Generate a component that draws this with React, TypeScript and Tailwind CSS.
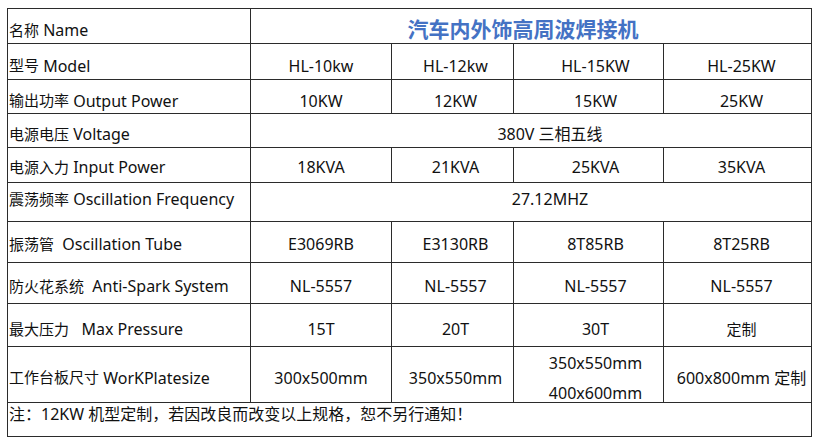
import React from 'react';

// Spec sheet for the HF welder — laid out as an Excel-like grid
const font = { fontFamily: '"Noto Sans", "Noto Sans CJK SC", sans-serif' };

type Cell = { text: string | string[]; span?: number; cls?: string };
type Row = { h: string; v: string; cn: string; en: string; cells: Cell[] };

const colPad = ['', 'pl-[6px]', 'pl-[14px]', 'pl-[8px]'];

const rows: Row[] = [
  { h: 'h-[35px]', v: 'pt-[8px]', cn: '名称', en: ' Name', cells: [{ text: '汽车内外饰高周波焊接机', span: 4, cls: 'text-[21px] font-bold text-[#4472c4] pr-[16px]' }] },
  { h: 'h-[36px]', v: 'pt-[8px]', cn: '型号', en: ' Model', cells: [{ text: 'HL-10kw' }, { text: 'HL-12kw' }, { text: 'HL-15KW' }, { text: 'HL-25KW' }] },
  { h: 'h-[34px]', v: 'pt-[8px]', cn: '输出功率', en: ' Output Power', cells: [{ text: '10KW' }, { text: '12KW' }, { text: '15KW' }, { text: '25KW' }] },
  { h: 'h-[34px]', v: 'pt-[7px]', cn: '电源电压', en: ' Voltage', cells: [{ text: '380V 三相五线', span: 4, cls: 'pl-[38px]' }] },
  { h: 'h-[35px]', v: 'pt-[4px]', cn: '电源入力', en: ' Input Power', cells: [{ text: '18KVA' }, { text: '21KVA' }, { text: '25KVA' }, { text: '35KVA' }] },
  { h: 'h-[39px]', v: 'pb-[6px]', cn: '震荡频率', en: ' Oscillation Frequency', cells: [{ text: '27.12MHZ', span: 4, cls: 'pl-[38px]' }] },
  { h: 'h-[41px]', v: 'pt-[4px]', cn: '振荡管', en: '  Oscillation Tube', cells: [{ text: 'E3069RB' }, { text: 'E3130RB' }, { text: '8T85RB' }, { text: '8T25RB' }] },
  { h: 'h-[41px]', v: 'pt-[6px]', cn: '防火花系统', en: '  Anti-Spark System', cells: [{ text: 'NL-5557' }, { text: 'NL-5557' }, { text: 'NL-5557' }, { text: 'NL-5557' }] },
  { h: 'h-[43px]', v: 'pt-[8px]', cn: '最大压力', en: '   Max Pressure', cells: [{ text: '15T' }, { text: '20T' }, { text: '30T' }, { text: '定制', cls: 'text-[15px]' }] },
  { h: 'h-[56px]', v: 'pt-[6px]', cn: '工作台板尺寸', en: ' WorKPlatesize', cells: [{ text: '300x500mm' }, { text: '350x550mm' }, { text: ['350x550mm', '400x600mm'] }, { text: '600x800mm 定制' }] },
];

const spanCls: Record<number, string> = { 1: 'col-span-1', 4: 'col-span-4', 5: 'col-span-5' };

export default function App() {
  return (
    <div className="w-[820px] h-[444px] bg-white text-[16px] text-[#111]" style={font}>
      <div className="ml-[7px] mt-[8px] w-[805px] grid grid-cols-[243px_141px_122px_150px_148px] border-l border-t border-[#2b2b2b]">
        {rows.map((r, ri) => (
          <React.Fragment key={ri}>
            <div className={`${r.h} ${r.v} flex items-center pl-[1px] border-r border-b border-[#2b2b2b] whitespace-pre`}>
              <span className="text-[15px]">{r.cn}</span>
              <span>{r.en}</span>
            </div>
            {r.cells.map((c, ci) => (
              <div
                key={ci}
                className={`${r.h} ${r.v} ${spanCls[c.span ?? 1]} ${c.span ? '' : colPad[ci]} ${c.cls ?? ''} flex flex-col items-center justify-center border-r border-b border-[#2b2b2b] whitespace-pre`}
              >
                {Array.isArray(c.text) ? (
                  c.text.map((t) => (
                    <span key={t} className="leading-[30px]">{t}</span>
                  ))
                ) : (
                  <span>{c.text}</span>
                )}
              </div>
            ))}
          </React.Fragment>
        ))}
        <div className="col-span-5 h-[34px] pb-[12px] flex items-center pl-[1px] border-r border-b border-[#2b2b2b]">
          注：12KW 机型定制，若因改良而改变以上规格，恕不另行通知！
        </div>
      </div>
    </div>
  );
}
